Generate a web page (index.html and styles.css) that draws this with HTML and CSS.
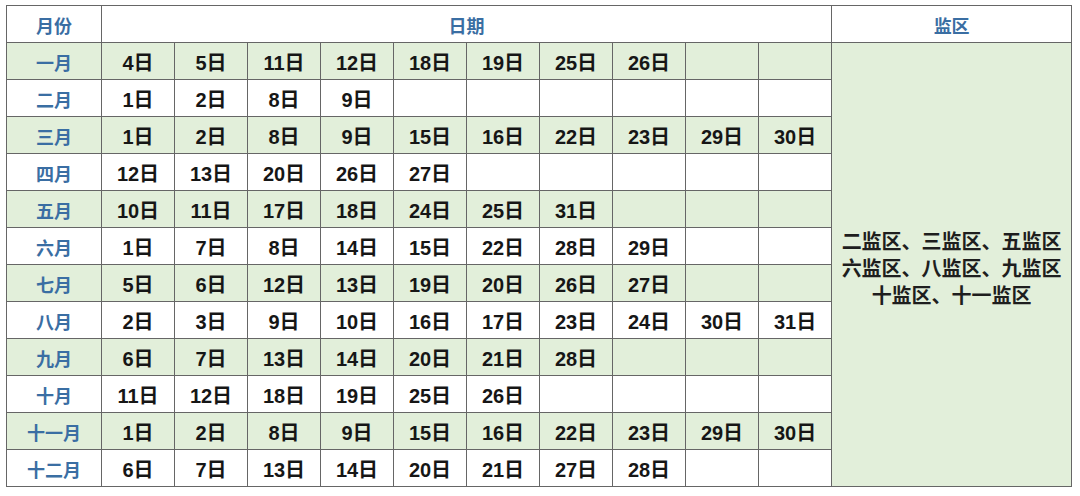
FILE: index.html
```html
<!DOCTYPE html>
<html lang="zh">
<head>
<meta charset="utf-8">
<link rel="stylesheet" href="styles.css">
</head>
<body>
<table class="sched">
  <colgroup>
    <col class="c-month">
    <col class="c-day"><col class="c-day"><col class="c-day"><col class="c-day"><col class="c-day">
    <col class="c-day"><col class="c-day"><col class="c-day"><col class="c-day"><col class="c-day">
    <col class="c-zone">
  </colgroup>
  <tr class="head">
    <td class="m">月份</td>
    <td class="m" colspan="10">日期</td>
    <td class="m">监区</td>
  </tr>
  <tr class="g"><td class="m">一月</td><td>4日</td><td>5日</td><td>11日</td><td>12日</td><td>18日</td><td>19日</td><td>25日</td><td>26日</td><td></td><td></td>
    <td class="zone" rowspan="12">二监区、三监区、五监区<br>六监区、八监区、九监区<br>十监区、十一监区</td></tr>
  <tr><td class="m">二月</td><td>1日</td><td>2日</td><td>8日</td><td>9日</td><td></td><td></td><td></td><td></td><td></td><td></td></tr>
  <tr class="g"><td class="m">三月</td><td>1日</td><td>2日</td><td>8日</td><td>9日</td><td>15日</td><td>16日</td><td>22日</td><td>23日</td><td>29日</td><td>30日</td></tr>
  <tr><td class="m">四月</td><td>12日</td><td>13日</td><td>20日</td><td>26日</td><td>27日</td><td></td><td></td><td></td><td></td><td></td></tr>
  <tr class="g"><td class="m">五月</td><td>10日</td><td>11日</td><td>17日</td><td>18日</td><td>24日</td><td>25日</td><td>31日</td><td></td><td></td><td></td></tr>
  <tr><td class="m">六月</td><td>1日</td><td>7日</td><td>8日</td><td>14日</td><td>15日</td><td>22日</td><td>28日</td><td>29日</td><td></td><td></td></tr>
  <tr class="g"><td class="m">七月</td><td>5日</td><td>6日</td><td>12日</td><td>13日</td><td>19日</td><td>20日</td><td>26日</td><td>27日</td><td></td><td></td></tr>
  <tr><td class="m">八月</td><td>2日</td><td>3日</td><td>9日</td><td>10日</td><td>16日</td><td>17日</td><td>23日</td><td>24日</td><td>30日</td><td>31日</td></tr>
  <tr class="g"><td class="m">九月</td><td>6日</td><td>7日</td><td>13日</td><td>14日</td><td>20日</td><td>21日</td><td>28日</td><td></td><td></td><td></td></tr>
  <tr><td class="m">十月</td><td>11日</td><td>12日</td><td>18日</td><td>19日</td><td>25日</td><td>26日</td><td></td><td></td><td></td><td></td></tr>
  <tr class="g"><td class="m">十一月</td><td>1日</td><td>2日</td><td>8日</td><td>9日</td><td>15日</td><td>16日</td><td>22日</td><td>23日</td><td>29日</td><td>30日</td></tr>
  <tr><td class="m">十二月</td><td>6日</td><td>7日</td><td>13日</td><td>14日</td><td>20日</td><td>21日</td><td>27日</td><td>28日</td><td></td><td></td></tr>
</table>
</body>
</html>
```
FILE: styles.css
```css
html, body {
  margin: 0;
  background: #ffffff;
}
body {
  padding: 5px 0 0 6px;
}
.sched {
  border-collapse: collapse;
  table-layout: fixed;
  width: 1066px;
  font-family: "Liberation Sans", "Noto Sans CJK SC", sans-serif;
}
.c-month { width: 95px; }
.c-day { width: 73px; }
.c-zone { width: 240px; }
.sched tr {
  height: 37px;
}
.sched td {
  border: 1px solid #666666;
  padding: 3px 0 0;
  text-align: center;
  vertical-align: middle;
  font-size: 20px;
  font-weight: bold;
  color: #161616;
  line-height: 22px;
}
.sched tr.g td {
  background: #e2efda;
}
.sched td.m {
  color: #3a6ea3;
  font-family: "Noto Sans CJK SC", sans-serif;
  font-weight: 600;
  font-size: 18px;
  line-height: 20px;
  padding-top: 1px;
}
.sched td.zone {
  background: #e2efda;
  font-family: "Noto Sans CJK SC", sans-serif;
  font-weight: 600;
  font-size: 20px;
  line-height: 27px;
  color: #1e1e1e;
  padding-top: 6px;
}
```
